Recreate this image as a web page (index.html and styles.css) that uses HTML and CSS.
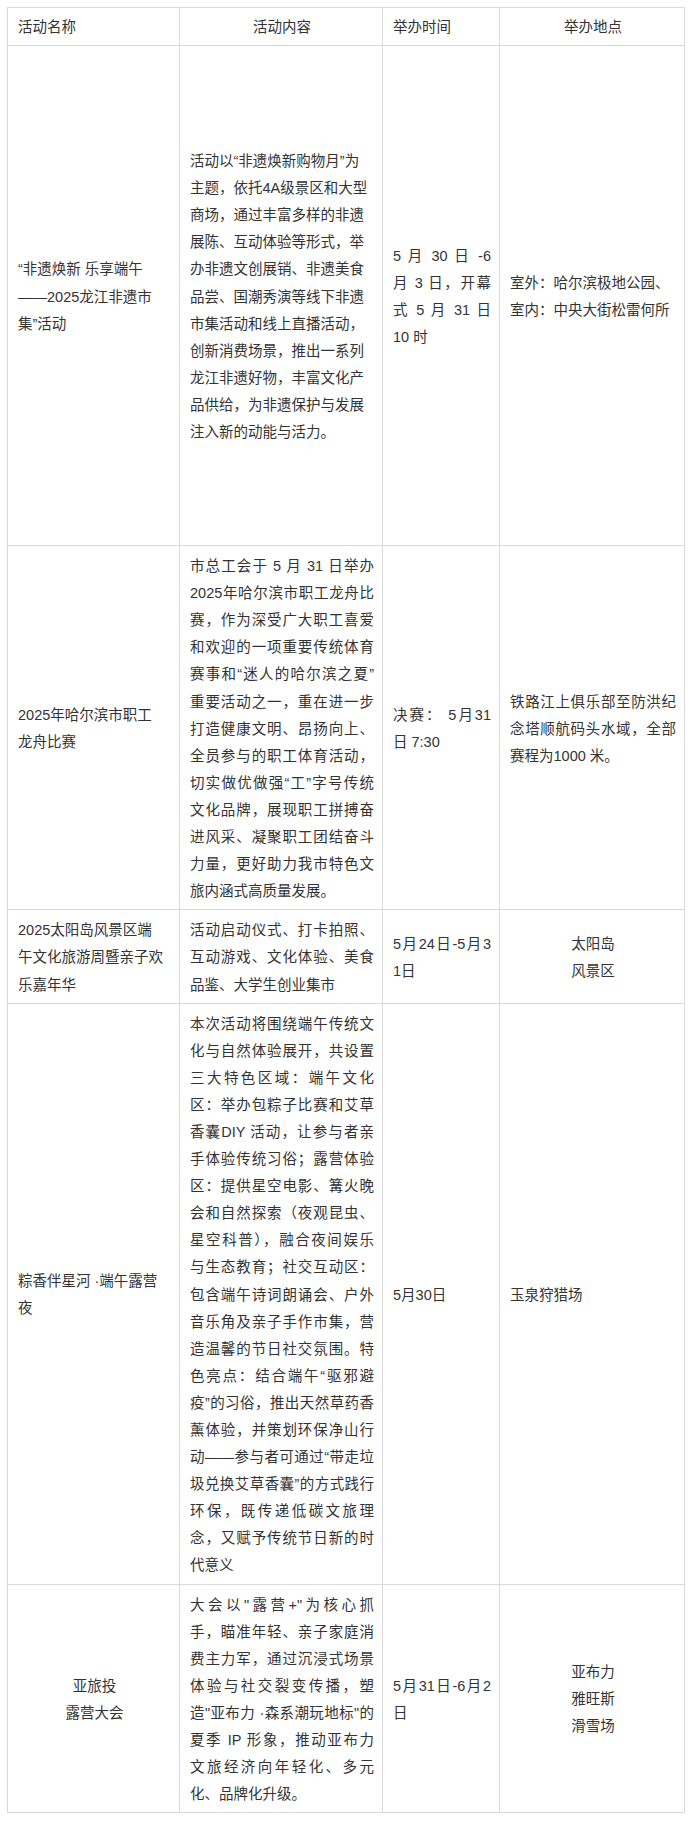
FILE: index.html
```html
<!DOCTYPE html>
<html lang="zh-CN">
<head>
<meta charset="utf-8">
<title>端午活动一览</title>
<link rel="stylesheet" href="styles.css">
</head>
<body>
<div class="tbl">
  <div class="c h">活动名称</div>
  <div class="c h ctr">活动内容</div>
  <div class="c h">举办时间</div>
  <div class="c h ctr">举办地点</div>

  <div class="c r1"><div class="tx">
    <span class="ln">“非遗焕新 乐享端午</span>
    <span class="ln">——2025龙江非遗市</span>
    <span class="ln">集”活动</span>
  </div></div>
  <div class="c r1"><div class="tx">
    <span class="ln">活动以“非遗焕新购物月”为</span>
    <span class="ln">主题，依托4A级景区和大型</span>
    <span class="ln">商场，通过丰富多样的非遗</span>
    <span class="ln">展陈、互动体验等形式，举</span>
    <span class="ln">办非遗文创展销、非遗美食</span>
    <span class="ln">品尝、国潮秀演等线下非遗</span>
    <span class="ln">市集活动和线上直播活动，</span>
    <span class="ln">创新消费场景，推出一系列</span>
    <span class="ln">龙江非遗好物，丰富文化产</span>
    <span class="ln">品供给，为非遗保护与发展</span>
    <span class="ln">注入新的动能与活力。</span>
  </div></div>
  <div class="c r1"><div class="tx j">
    <span class="ln">5 月 30 日 -6</span>
    <span class="ln">月 3 日，开幕</span>
    <span class="ln">式 5 月 31 日</span>
    <span class="ln">10 时</span>
  </div></div>
  <div class="c r1"><div class="tx">
    <span class="ln">室外：哈尔滨极地公园、</span>
    <span class="ln">室内：中央大街松雷何所</span>
  </div></div>

  <div class="c"><div class="tx">
    <span class="ln">2025年哈尔滨市职工</span>
    <span class="ln">龙舟比赛</span>
  </div></div>
  <div class="c"><div class="tx j">
    <span class="ln">市总工会于 5 月 31 日举办</span>
    <span class="ln">2025年哈尔滨市职工龙舟比</span>
    <span class="ln">赛，作为深受广大职工喜爱</span>
    <span class="ln">和欢迎的一项重要传统体育</span>
    <span class="ln">赛事和“迷人的哈尔滨之夏”</span>
    <span class="ln">重要活动之一，重在进一步</span>
    <span class="ln">打造健康文明、昂扬向上、</span>
    <span class="ln">全员参与的职工体育活动，</span>
    <span class="ln">切实做优做强“工”字号传统</span>
    <span class="ln">文化品牌，展现职工拼搏奋</span>
    <span class="ln">进风采、凝聚职工团结奋斗</span>
    <span class="ln">力量，更好助力我市特色文</span>
    <span class="ln">旅内涵式高质量发展。</span>
  </div></div>
  <div class="c"><div class="tx j">
    <span class="ln">决赛： 5月31</span>
    <span class="ln">日 7:30</span>
  </div></div>
  <div class="c"><div class="tx j">
    <span class="ln">铁路江上俱乐部至防洪纪</span>
    <span class="ln">念塔顺航码头水域，全部</span>
    <span class="ln">赛程为1000 米。</span>
  </div></div>

  <div class="c"><div class="tx">
    <span class="ln">2025太阳岛风景区端</span>
    <span class="ln">午文化旅游周暨亲子欢</span>
    <span class="ln">乐嘉年华</span>
  </div></div>
  <div class="c"><div class="tx j">
    <span class="ln">活动启动仪式、打卡拍照、</span>
    <span class="ln">互动游戏、文化体验、美食</span>
    <span class="ln">品鉴、大学生创业集市</span>
  </div></div>
  <div class="c"><div class="tx j">
    <span class="ln">5月24日-5月3</span>
    <span class="ln">1日</span>
  </div></div>
  <div class="c"><div class="tx ctr">
    <span class="ln">太阳岛</span>
    <span class="ln">风景区</span>
  </div></div>

  <div class="c"><div class="tx">
    <span class="ln">粽香伴星河 ·端午露营</span>
    <span class="ln">夜</span>
  </div></div>
  <div class="c"><div class="tx j">
    <span class="ln">本次活动将围绕端午传统文</span>
    <span class="ln">化与自然体验展开，共设置</span>
    <span class="ln">三大特色区域：端午文化</span>
    <span class="ln">区：举办包粽子比赛和艾草</span>
    <span class="ln">香囊DIY 活动，让参与者亲</span>
    <span class="ln">手体验传统习俗；露营体验</span>
    <span class="ln">区：提供星空电影、篝火晚</span>
    <span class="ln">会和自然探索（夜观昆虫、</span>
    <span class="ln">星空科普），融合夜间娱乐</span>
    <span class="ln">与生态教育；社交互动区：</span>
    <span class="ln">包含端午诗词朗诵会、户外</span>
    <span class="ln">音乐角及亲子手作市集，营</span>
    <span class="ln">造温馨的节日社交氛围。特</span>
    <span class="ln">色亮点：结合端午“驱邪避</span>
    <span class="ln">疫”的习俗，推出天然草药香</span>
    <span class="ln">薰体验，并策划环保净山行</span>
    <span class="ln">动——参与者可通过“带走垃</span>
    <span class="ln">圾兑换艾草香囊”的方式践行</span>
    <span class="ln">环保，既传递低碳文旅理</span>
    <span class="ln">念，又赋予传统节日新的时</span>
    <span class="ln">代意义</span>
  </div></div>
  <div class="c"><div class="tx">
    <span class="ln">5月30日</span>
  </div></div>
  <div class="c"><div class="tx">
    <span class="ln">玉泉狩猎场</span>
  </div></div>

  <div class="c"><div class="tx ctr">
    <span class="ln">亚旅投</span>
    <span class="ln">露营大会</span>
  </div></div>
  <div class="c"><div class="tx j">
    <span class="ln">大会以"露营+"为核心抓</span>
    <span class="ln">手，瞄准年轻、亲子家庭消</span>
    <span class="ln">费主力军，通过沉浸式场景</span>
    <span class="ln">体验与社交裂变传播，塑</span>
    <span class="ln">造"亚布力 ·森系潮玩地标"的</span>
    <span class="ln">夏季 IP 形象，推动亚布力</span>
    <span class="ln">文旅经济向年轻化、多元</span>
    <span class="ln">化、品牌化升级。</span>
  </div></div>
  <div class="c"><div class="tx j">
    <span class="ln">5月31日-6月2</span>
    <span class="ln">日</span>
  </div></div>
  <div class="c"><div class="tx ctr">
    <span class="ln">亚布力</span>
    <span class="ln">雅旺斯</span>
    <span class="ln">滑雪场</span>
  </div></div>
</div>
</body>
</html>
```

FILE: styles.css
```css
html, body {
  margin: 0;
  padding: 0;
  background: #ffffff;
}

body {
  padding: 7px 0 35px 7px;
  font-family: "Liberation Sans", "Noto Sans CJK SC", sans-serif;
  font-size: 14.5px;
  line-height: 27.1px;
  color: #333333;
}

.tbl {
  display: grid;
  grid-template-columns: 172px 203px 117px 185px;
  width: max-content;
  border-top: 1px solid #dadada;
  border-left: 1px solid #dadada;
}

.c {
  box-sizing: border-box;
  border-right: 1px solid #dadada;
  border-bottom: 1px solid #dadada;
  padding: 7px 8px 4px 10px;
  display: flex;
  flex-direction: column;
  justify-content: center;
}

.h {
  padding-top: 6px;
  padding-bottom: 4px;
}

.ctr {
  text-align: center;
}

.r1 {
  min-height: 500px;
}

.ln {
  display: block;
  white-space: nowrap;
}

.j .ln {
  text-align: justify;
  text-align-last: justify;
}

.j .ln:last-child {
  text-align-last: left;
}
```
